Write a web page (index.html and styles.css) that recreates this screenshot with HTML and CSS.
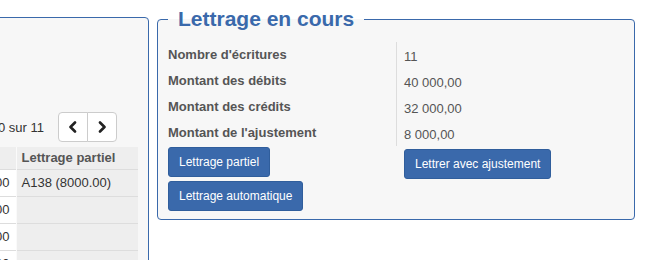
FILE: index.html
```html
<!DOCTYPE html>
<html lang="fr">
<head>
<meta charset="utf-8">
<title>Lettrage</title>
<link rel="stylesheet" href="styles.css">
</head>
<body>
<div class="page">
  <section class="panel ledger">
    <div class="pager">
      <span class="pager-info">Résultats 1 à 10 sur 11</span>
      <div class="btn-group">
        <button class="pg-btn first" aria-label="Précédent">
          <svg width="10" height="12" viewBox="0 0 10 12"><polyline points="7,1.5 2.5,6 7,10.5" fill="none" stroke="#222" stroke-width="2.6" stroke-linecap="round" stroke-linejoin="round"/></svg>
        </button>
        <button class="pg-btn last" aria-label="Suivant">
          <svg width="10" height="12" viewBox="0 0 10 12"><polyline points="3,1.5 7.5,6 3,10.5" fill="none" stroke="#222" stroke-width="2.6" stroke-linecap="round" stroke-linejoin="round"/></svg>
        </button>
      </div>
    </div>
    <table class="entries">
      <colgroup>
        <col class="c-date"><col class="c-label"><col class="c-amt"><col class="c-amt"><col class="c-partial">
      </colgroup>
      <thead>
        <tr><th>Date</th><th>Libellé</th><th>Débit</th><th>Crédit</th><th class="partial">Lettrage partiel</th></tr>
      </thead>
      <tbody>
        <tr><td>01/03</td><td>Facture</td><td class="num"></td><td class="num">8000.00</td><td class="partial">A138 (8000.00)</td></tr>
        <tr><td>02/03</td><td>Facture</td><td class="num"></td><td class="num">8000.00</td><td class="partial"></td></tr>
        <tr><td>03/03</td><td>Facture</td><td class="num"></td><td class="num">8000.00</td><td class="partial"></td></tr>
        <tr><td>04/03</td><td>Facture</td><td class="num"></td><td class="num">8000.00</td><td class="partial"></td></tr>
      </tbody>
    </table>
  </section>

  <fieldset class="current">
    <legend>Lettrage en cours</legend>
    <div class="summary">
      <div class="col-labels">
        <div class="labels">
          <div class="row">Nombre d'écritures</div>
          <div class="row">Montant des débits</div>
          <div class="row">Montant des crédits</div>
          <div class="row">Montant de l'ajustement</div>
        </div>
        <div class="actions stack">
          <button class="btn">Lettrage partiel</button>
          <button class="btn">Lettrage automatique</button>
        </div>
      </div>
      <div class="col-values">
        <div class="values">
          <div class="row">11</div>
          <div class="row">40 000,00</div>
          <div class="row">32 000,00</div>
          <div class="row">8 000,00</div>
        </div>
        <div class="actions single">
          <button class="btn">Lettrer avec ajustement</button>
        </div>
      </div>
    </div>
  </fieldset>
</div>
</body>
</html>
```

FILE: styles.css
```css
html, body {
  margin: 0;
  height: 260px;
  overflow: hidden;
  background: #fff;
}
body {
  font-family: "Liberation Sans", Arial, sans-serif;
  font-size: 13px;
  color: #333;
}
.page {
  display: flex;
  align-items: flex-start;
  gap: 8px;
}

/* left panel */
.ledger {
  flex: none;
  box-sizing: border-box;
  width: 400px;
  height: 320px;
  margin-left: -251px;
  margin-top: 17px;
  padding: 10px;
  border: 1px solid #3a69ab;
  border-radius: 4px;
  background: #f7f7f7;
}
.pager {
  display: flex;
  justify-content: flex-end;
  align-items: center;
  gap: 14px;
  margin-top: 84px;
  padding-right: 21px;
  height: 30px;
}
.pager-info {
  color: #333;
  white-space: nowrap;
}
.btn-group {
  display: flex;
}
.pg-btn {
  box-sizing: border-box;
  width: 30px;
  height: 30px;
  padding: 0;
  display: flex;
  align-items: center;
  justify-content: center;
  background: #fff;
  border: 1px solid #ccc;
}
.pg-btn.first { border-radius: 4px 0 0 4px; }
.pg-btn.last { border-radius: 0 4px 4px 0; margin-left: -1px; }

.entries {
  width: 100%;
  margin-top: 5px;
  table-layout: fixed;
  border-collapse: collapse;
  background: #fff;
}
.c-date { width: 60px; }
.c-amt { width: 70px; }
.c-partial { width: 122px; }
.entries th {
  background: #eee;
  color: #555;
  font-weight: bold;
  text-align: left;
  padding: 3px 6px;
  line-height: 16px;
  white-space: nowrap;
  overflow: hidden;
}
.entries td {
  padding: 5px 6px;
  line-height: 16px;
  border-top: 1px solid #ddd;
  white-space: nowrap;
  overflow: hidden;
}
.entries .num { text-align: right; }
.entries .partial {
  background: #eee;
  border-left: 1px solid #fafafa;
  padding-left: 5px;
}

/* right panel */
.current {
  flex: none;
  box-sizing: border-box;
  width: 478px;
  margin: 7px 0 0 0;
  padding: 0 10px 8px;
  border: 1px solid #3a69ab;
  border-radius: 4px;
  background: #f7f7f7;
  min-width: 0;
}
.current legend {
  padding: 0 10px;
  font-size: 21px;
  font-weight: bold;
  line-height: 24px;
  color: #3a69ab;
}
.summary {
  display: flex;
  padding-top: 9px;
}
.col-labels {
  flex: none;
  width: 228px;
}
.col-values {
  flex: 1;
  margin-top: 2px;
}
.row {
  box-sizing: border-box;
  height: 26px;
  padding-top: 4px;
  line-height: 22px;
  white-space: nowrap;
}
.labels .row {
  font-weight: bold;
  color: #555;
}
.values {
  border-left: 1px solid #ddd;
  padding-left: 7px;
  color: #555;
}
.actions {
  margin-top: 3px;
}
.actions.stack {
  display: flex;
  flex-direction: column;
  align-items: flex-start;
  gap: 4px;
}
.actions.single {
  margin-left: 8px;
}
.btn {
  font-family: "Liberation Sans", Arial, sans-serif;
  font-size: 12px;
  line-height: 18px;
  color: #fff;
  background: #3a69ab;
  border: 1px solid #305e9c;
  border-radius: 3px;
  padding: 5px 10px;
  white-space: nowrap;
}
```
